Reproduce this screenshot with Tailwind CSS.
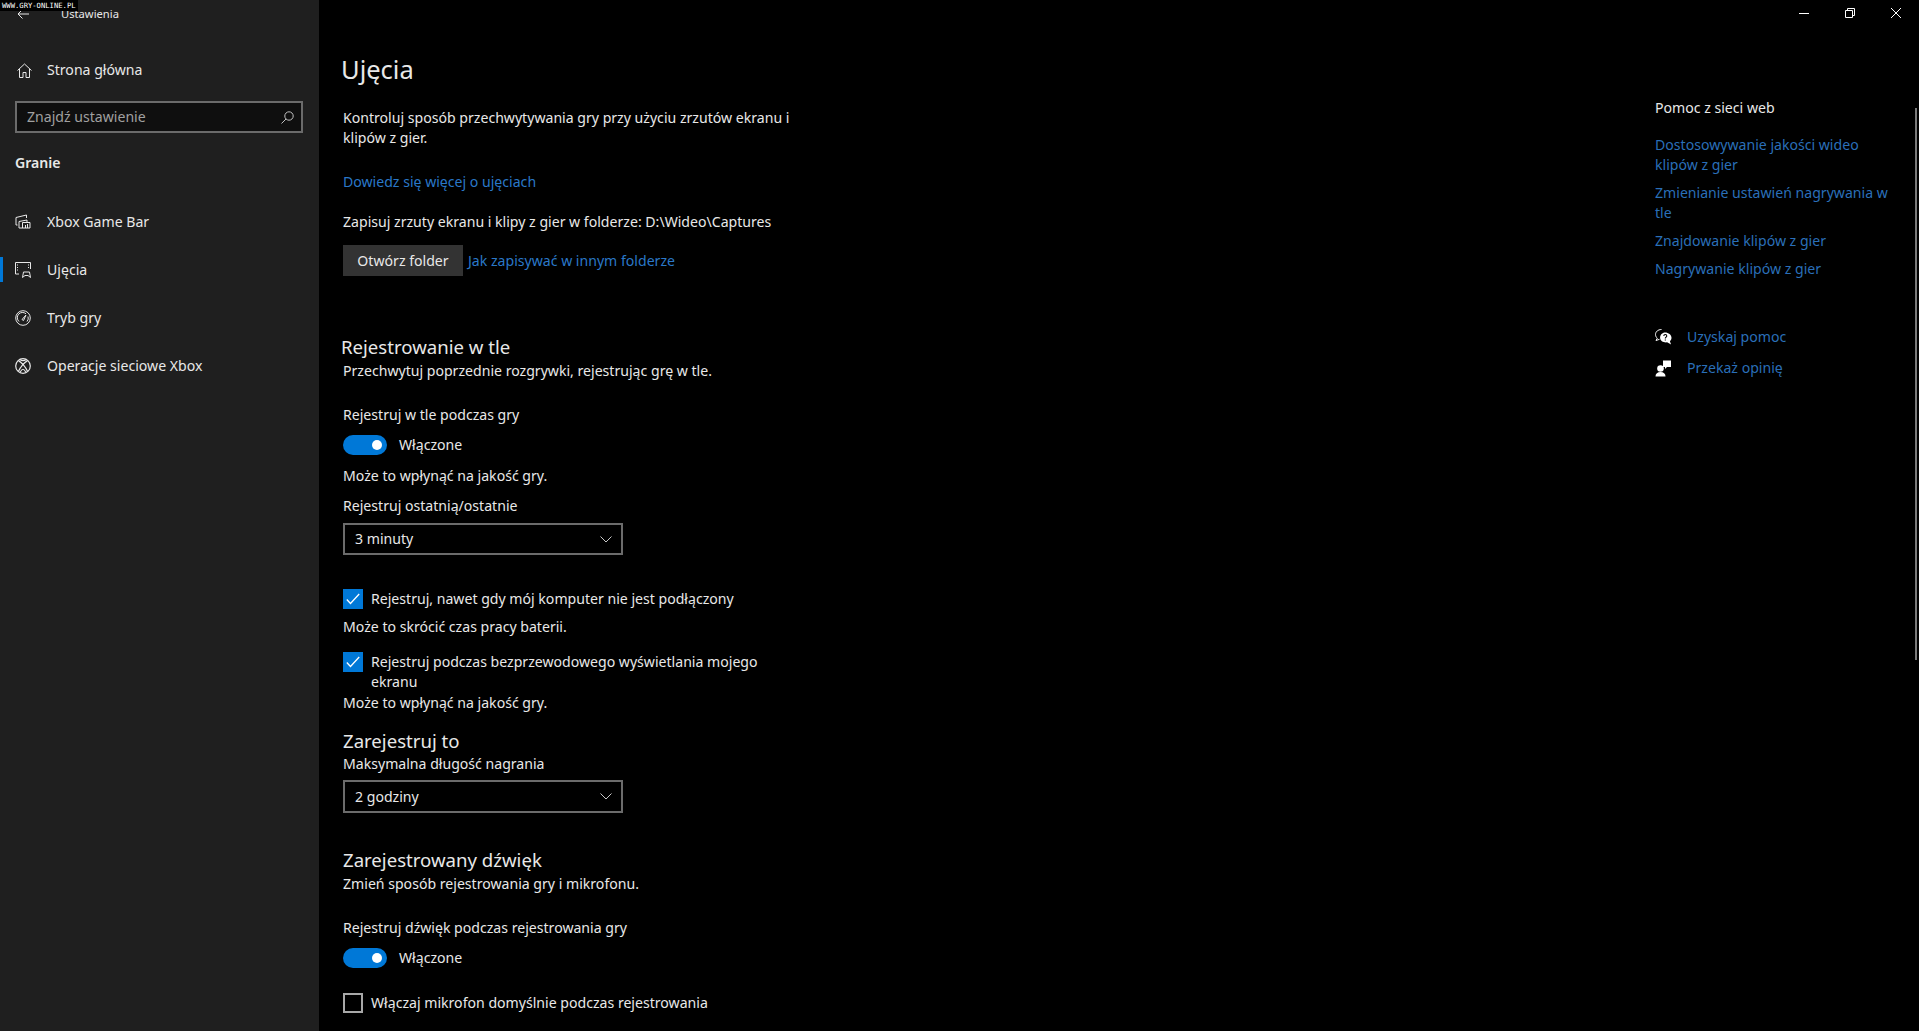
<!DOCTYPE html>
<html lang="pl">

<head>
    <meta charset="UTF-8">
    <title>Ustawienia</title>
    <script src="https://cdn.jsdelivr.net/npm/@tailwindcss/browser@4"></script>
</head>

<body class="bg-black">
    <div class="relative flex h-[1031px] w-[1919px] overflow-hidden bg-black font-['Noto_Sans',sans-serif] text-[14.1px] leading-5 text-[#e8e8e8]">
        <!-- watermark -->
        <div class="absolute left-0 top-0 z-10 flex h-[11px] w-[78px] items-center overflow-hidden whitespace-nowrap bg-black pl-[2px] font-['DejaVu_Sans_Mono',monospace] text-[7.2px] leading-none text-white">WWW.GRY-ONLINE.PL</div>

        <!-- sidebar -->
        <aside class="flex w-[319px] shrink-0 flex-col bg-[#1f1f1f]">
            <div class="flex h-[28px] items-center pl-[17px] text-[11.2px]">
                <svg class="h-3 w-3" viewBox="0 0 12 12" fill="none" stroke="#e8e8e8"><path d="M12 6H1M5.500 1.500 1 6l4.500 4.500" /></svg>
                <span class="ml-[32px]">Ustawienia</span>
            </div>
            <div class="mt-[18px] flex h-[48px] items-center pl-[17px]">
                <svg class="h-[15px] w-[15px]" viewBox="0 0 15 15" fill="none" stroke="#e8e8e8"><path d="M.5 7.500 7.500 1l7 6.500M2.500 6v8.500h3.500V9.500h3v5h3.500V6" /></svg>
                <span class="ml-[15px]">Strona główna</span>
            </div>
            <div class="mx-[15px] mt-[7px] flex h-[32px] w-[288px] items-center justify-between border-2 border-[#6b6b6b] bg-[#0f0f0f] pl-[10px] pr-[7px] text-[#a0a0a0]">
                <span>Znajdź ustawienie</span>
                <svg class="h-[13px] w-[13px]" viewBox="0 0 13 13" fill="none" stroke="#c0c0c0"><circle cx="8" cy="5" r="4.200" /><path d="M5 8 .5 12.500" /></svg>
            </div>
            <div class="mx-[15px] mt-[20px] font-semibold">Granie</div>
            <nav class="mt-[25px] flex flex-col">
                <div class="flex h-[48px] items-center pl-[15px]">
                    <svg class="h-[16px] w-[16px]" viewBox="0 0 16 16" fill="none" stroke="#e8e8e8"><path d="M2.500 11H1V3.500L11.500 1v3M4 14V7.500l8-1.500v2M4 14h11V8.500H7.500V14M10.500 14v-3M12.500 14v-4" /></svg>
                    <span class="ml-[16px]">Xbox Game Bar</span>
                </div>
                <div class="relative flex h-[48px] items-center pl-[15px]">
                    <div class="absolute left-0 top-[11px] h-[25px] w-[3px] bg-[#0078d7]"></div>
                    <svg class="h-[16px] w-[16px]" viewBox="0 0 16 16" fill="none" stroke="#e8e8e8"><path d="M4 12H.5V.5h15V7M3 3H2M3 5.500H2M3 8H2M14 3h-1M14 5.500h-1" /><path d="M7.500 15.500 8.500 10h6l1 5.500-2.500-2H10z" /></svg>
                    <span class="ml-[16px]">Ujęcia</span>
                </div>
                <div class="flex h-[48px] items-center pl-[15px]">
                    <svg class="h-[16px] w-[16px]" viewBox="0 0 16 16" fill="none" stroke="#e8e8e8"><circle cx="8" cy="8" r="7.300" /><path d="M4 11.500A5 5 0 0 1 11 3.800M13 6.500a5 5 0 0 1-1 5M7 9.500 11 5l-2.500 5.500z" /></svg>
                    <span class="ml-[16px]">Tryb gry</span>
                </div>
                <div class="flex h-[48px] items-center pl-[15px]">
                    <svg class="h-[16px] w-[16px]" viewBox="0 0 16 16" fill="none" stroke="#e8e8e8" stroke-width="1.200"><circle cx="8" cy="8" r="7.300" /><path d="M3.500 2.800C6 3.500 10.500 9 12.500 13.300M12.500 2.800C10 3.500 5.500 9 3.500 13.300M5 1.800Q8 3.500 11 1.800M5 14.500Q8 8 11 14.500" /></svg>
                    <span class="ml-[16px]">Operacje sieciowe Xbox</span>
                </div>
            </nav>
        </aside>

        <!-- content -->
        <main class="w-[500px] shrink-0 pl-[24px] pt-[49px]">
            <h1 class="-ml-[2px] text-[25.5px] leading-10 font-normal">Ujęcia</h1>
            <p class="mt-[19px] w-[470px]">Kontroluj sposób przechwytywania gry przy użyciu zrzutów ekranu i klipów z gier.</p>
            <a class="mt-[24px] block text-[#2a78c8]">Dowiedz się więcej o ujęciach</a>
            <p class="mt-[20px]">Zapisuj zrzuty ekranu i klipy z gier w folderze: D:\Wideo\Captures</p>
            <div class="mt-[13px] flex items-center">
                <button class="h-[31px] w-[120px] bg-[#333333]">Otwórz folder</button>
                <a class="ml-[5px] text-[#2a78c8]">Jak zapisywać w innym folderze</a>
            </div>

            <h2 class="-ml-[2px] mt-[57px] text-[18.6px] leading-7 font-normal">Rejestrowanie w tle</h2>
            <p class="mt-0">Przechwytuj poprzednie rozgrywki, rejestrując grę w tle.</p>
            <p class="mt-[24px]">Rejestruj w tle podczas gry</p>
            <div class="mt-[10px] flex items-center">
                <div class="flex h-[20px] w-[44px] items-center justify-end rounded-full bg-[#0078d7] pr-[5px]">
                    <div class="h-[10px] w-[10px] rounded-full bg-white"></div>
                </div>
                <span class="ml-[12px]">Włączone</span>
            </div>
            <p class="mt-[11px]">Może to wpłynąć na jakość gry.</p>
            <p class="mt-[10px]">Rejestruj ostatnią/ostatnie</p>
            <div class="mt-[7px] flex h-[32px] w-[280px] items-center justify-between border-2 border-[#6b6b6b] pl-[10px] pr-[9px]">
                <span>3 minuty</span>
                <svg class="h-[7px] w-[12px]" viewBox="0 0 12 7" fill="none" stroke="#c8c8c8"><path d="M.5.500 6 6l5.500-5.500" /></svg>
            </div>

            <div class="mt-[34px] flex h-[20px] items-center">
                <div class="flex h-[20px] w-[20px] items-center justify-center bg-[#0078d7]">
                    <svg class="h-[12px] w-[14px]" viewBox="0 0 14 12" fill="none" stroke="white" stroke-width="1.300"><path d="M.8 6.500 4.500 10.500 13.200 1" /></svg>
                </div>
                <span class="ml-[8px]">Rejestruj, nawet gdy mój komputer nie jest podłączony</span>
            </div>
            <p class="mt-[8px]">Może to skrócić czas pracy baterii.</p>
            <div class="mt-[15px] flex">
                <div class="flex h-[20px] w-[20px] shrink-0 items-center justify-center bg-[#0078d7]">
                    <svg class="h-[12px] w-[14px]" viewBox="0 0 14 12" fill="none" stroke="white" stroke-width="1.300"><path d="M.8 6.500 4.500 10.500 13.200 1" /></svg>
                </div>
                <span class="ml-[8px] w-[420px]">Rejestruj podczas bezprzewodowego wyświetlania mojego ekranu</span>
            </div>
            <p class="mt-[1px]">Może to wpłynąć na jakość gry.</p>

            <h2 class="mt-[14px] text-[18.6px] leading-7 font-normal">Zarejestruj to</h2>
            <p class="mt-[-1px]">Maksymalna długość nagrania</p>
            <div class="mt-[6px] flex h-[33px] w-[280px] items-center justify-between border-2 border-[#6b6b6b] pl-[10px] pr-[9px]">
                <span>2 godziny</span>
                <svg class="h-[7px] w-[12px]" viewBox="0 0 12 7" fill="none" stroke="#c8c8c8"><path d="M.5.500 6 6l5.500-5.500" /></svg>
            </div>

            <h2 class="mt-[33px] text-[18.6px] leading-7 font-normal">Zarejestrowany dźwięk</h2>
            <p class="mt-0">Zmień sposób rejestrowania gry i mikrofonu.</p>
            <p class="mt-[24px]">Rejestruj dźwięk podczas rejestrowania gry</p>
            <div class="mt-[10px] flex items-center">
                <div class="flex h-[20px] w-[44px] items-center justify-end rounded-full bg-[#0078d7] pr-[5px]">
                    <div class="h-[10px] w-[10px] rounded-full bg-white"></div>
                </div>
                <span class="ml-[12px]">Włączone</span>
            </div>
            <div class="mt-[25px] flex h-[20px] items-center">
                <div class="h-[20px] w-[20px] border-2 border-[#a8a8a8]"></div>
                <span class="ml-[8px]">Włączaj mikrofon domyślnie podczas rejestrowania</span>
            </div>
        </main>

        <!-- help column -->
        <section class="ml-[836px] w-[240px] shrink-0 pt-[98px]">
            <p>Pomoc z sieci web</p>
            <div class="mt-[17px] flex flex-col gap-[8px] text-[#2a6fb8]">
                <a>Dostosowywanie jakości wideo klipów z gier</a>
                <a>Zmienianie ustawień nagrywania w tle</a>
                <a>Znajdowanie klipów z gier</a>
                <a>Nagrywanie klipów z gier</a>
            </div>
            <div class="mt-[48px] flex items-center text-[#2a6fb8]">
                <svg class="h-[17px] w-[17px]" viewBox="0 0 17 17"><path d="M6.500.5C3 .5.500 2.800.500 5.500c0 1.500.7 2.800 1.800 3.700L1 11.500l3.500-1.200" fill="none" stroke="white" /><path d="M10 3.500c3.500 0 6.500 2.300 6.500 5.200 0 1.400-.6 2.600-1.600 3.500l1.200 3.300-4-2.200c-3.500.5-7-1.500-7-4.600 0-2.900 2.200-5.200 4.900-5.200z" fill="white" /><path d="M8.800 7c0-2 3-2 3 0 0 1.200-1.500 1.200-1.500 2.500M10.300 10.500v1" fill="none" stroke="black" stroke-width="1.100" /></svg>
                <span class="ml-[15px]">Uzyskaj pomoc</span>
            </div>
            <div class="mt-[11px] flex items-center text-[#2a6fb8]">
                <svg class="h-[17px] w-[17px]" viewBox="0 0 17 17" fill="white"><circle cx="5.500" cy="8.500" r="3.300" /><path d="M.5 16.500c0-3 2-4.500 5-4.500s5 1.500 5 4.500z" /><path d="M8 .5h8v6.500h-4l-2 2V7H8z" /></svg>
                <span class="ml-[15px]">Przekaż opinię</span>
            </div>
        </section>

        <!-- window controls + scrollbar -->
        <div class="absolute right-0 top-0 flex h-[26px] items-center text-white">
            <div class="flex w-[46px] justify-center">
                <svg class="h-[10px] w-[10px]" viewBox="0 0 10 10" stroke="white" fill="none"><path d="M0 5.500h10" /></svg>
            </div>
            <div class="flex w-[46px] justify-center">
                <svg class="h-[10px] w-[10px]" viewBox="0 0 10 10" stroke="white" fill="none"><path d="M.5 2.500h7v7h-7zM2.500 2.500v-2h7v7h-2" /></svg>
            </div>
            <div class="flex w-[46px] justify-center">
                <svg class="h-[10px] w-[10px]" viewBox="0 0 10 10" stroke="white" fill="none"><path d="M0 0l10 10M10 0 0 10" /></svg>
            </div>
        </div>
        <div class="absolute right-[2px] top-[108px] h-[552px] w-[2px] bg-[#7a7a7a]"></div>
    </div>
</body>

</html>
